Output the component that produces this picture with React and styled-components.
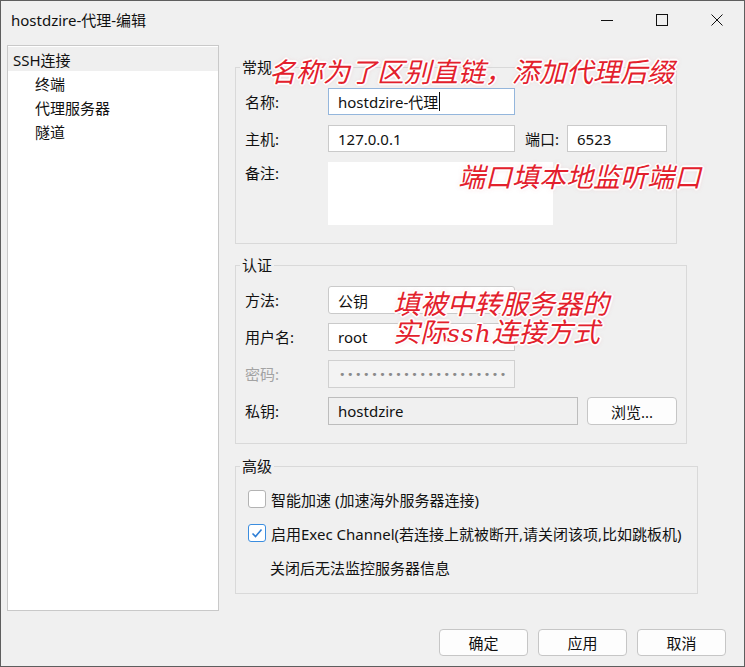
import React from "react";
import styled, { createGlobalStyle, css } from "styled-components";

const FONT = `"Noto Sans", "Noto Sans CJK SC", sans-serif`;

const Global = createGlobalStyle`
  html, body { margin: 0; padding: 0; background: #f0f0f0; }
  * { box-sizing: border-box; }
  body { font-family: ${FONT}; color: #111; }
`;

const Window = styled.div`
  position: relative;
  width: 745px;
  height: 667px;
  border: 1px solid #5e5e5e;
  background: #f0f0f0;
  display: flex;
  flex-direction: column;
  overflow: hidden;
`;

const TitleBar = styled.div`
  height: 38px;
  display: flex;
  align-items: center;
  justify-content: space-between;
  padding-left: 10px;
`;

const Title = styled.div`
  font-size: 15px;
  line-height: 18px;
  color: #111;
`;

const Controls = styled.div`
  display: flex;
  height: 100%;
`;

const Ctrl = styled.div`
  width: 55px;
  height: 100%;
  display: flex;
  align-items: center;
  justify-content: center;
`;

const Body = styled.div`
  display: flex;
  padding: 6px 0 0 6px;
`;

const Tree = styled.div`
  width: 212px;
  height: 566px;
  background: #fff;
  border: 1px solid #c9c9c9;
  padding-top: 1px;
`;

const TreeItem = styled.div`
  height: 24px;
  display: flex;
  align-items: center;
  font-size: 15px;
  padding-left: ${(p) => (p.$indent ? 27 : 5)}px;
  background: ${(p) => (p.$selected ? "#efefef" : "transparent")};
`;

const Main = styled.div`
  display: flex;
  flex-direction: column;
  padding: 13px 0 0 16px;
`;

const Group = styled.fieldset`
  margin: ${(p) => p.$mt || 0}px 0 0 0;
  padding: 0;
  width: ${(p) => p.$w}px;
  border: 1px solid #d9d9d9;
  min-width: 0;
`;

const Legend = styled.legend`
  margin-left: 4px;
  padding: 0 2px;
  font-size: 15px;
  line-height: 18px;
  color: #111;
`;

const GroupInner = styled.div`
  display: flex;
  flex-direction: column;
  gap: ${(p) => p.$gap}px;
  padding: ${(p) => p.$pad};
`;

const Row = styled.div`
  display: flex;
  align-items: ${(p) => (p.$top ? "flex-start" : "center")};
`;

const Label = styled.div`
  width: ${(p) => p.$w || 83}px;
  font-size: 15px;
  line-height: 18px;
  color: ${(p) => (p.$disabled ? "#a3a3a3" : "#111")};
  margin-top: ${(p) => p.$mt || 0}px;
  margin-left: ${(p) => p.$ml || 0}px;
  flex-shrink: 0;
`;

const fieldBase = css`
  height: ${(p) => p.$h || 27}px;
  width: ${(p) => p.$w}px;
  display: flex;
  align-items: center;
  padding-left: 9px;
  font-size: 15px;
  color: #111;
  flex-shrink: 0;
  overflow: hidden;
  white-space: nowrap;
`;

const Field = styled.div`
  ${fieldBase}
  background: ${(p) => (p.$bg ? p.$bg : "#fff")};
  border: 1px solid ${(p) => p.$border || "#cacaca"};
  border-radius: ${(p) => p.$radius || 0}px;
`;

const TextArea = styled.div`
  width: 225px;
  height: 63px;
  background: #fff;
  flex-shrink: 0;
`;

const Caret = styled.span`
  display: inline-block;
  width: 1px;
  height: 19px;
  background: #111;
  margin-left: 1px;
`;

const Dots = styled.span`
  font-size: 11px;
  letter-spacing: 1.55px;
  color: #8a8a8a;
  font-family: "DejaVu Sans", sans-serif;
  margin-left: 1px;
`;

const Button = styled.div`
  width: ${(p) => p.$w || 89}px;
  height: ${(p) => p.$h || 27}px;
  display: flex;
  align-items: center;
  justify-content: center;
  background: #fdfdfd;
  border: 1px solid #c6c6c6;
  border-radius: 4px;
  font-size: 15px;
  color: #111;
  margin-left: ${(p) => p.$ml || 0}px;
  flex-shrink: 0;
`;

const CheckRow = styled.div`
  height: 34px;
  display: flex;
  align-items: center;
  font-size: 15px;
  padding-left: ${(p) => (p.$plain ? 22 : 0)}px;
`;

const Box = styled.div`
  width: 18px;
  height: 18px;
  border: 1px solid ${(p) => (p.$on ? "#3b8ddf" : "#b3b3b3")};
  border-radius: 3px;
  background: #fff;
  margin-right: 5px;
  display: flex;
  align-items: center;
  justify-content: center;
`;

const Footer = styled.div`
  display: flex;
  justify-content: flex-end;
  gap: 10px;
  padding: 18px 18px 0 0;
`;

const Note = styled.div`
  position: absolute;
  left: ${(p) => p.$x}px;
  top: ${(p) => p.$y}px;
  font-family: "Noto Sans CJK SC", sans-serif;
  font-size: 27px;
  line-height: 28px;
  font-style: italic;
  color: #e3202c;
  white-space: nowrap;
  text-shadow:
    1px 0 0 #fff, -1px 0 0 #fff, 0 1px 0 #fff, 0 -1px 0 #fff,
    1px 1px 0 #fff, -1px -1px 0 #fff, 1px -1px 0 #fff, -1px 1px 0 #fff,
    2px 0 1px #fff, -2px 0 1px #fff, 0 2px 1px #fff, 0 -2px 1px #fff,
    0 0 4px rgba(230, 120, 130, 0.5);
`;

const Latin = styled.span`
  font-family: "DejaVu Serif", serif;
  font-size: 25px;
  letter-spacing: 1px;
`;

function Check({ on }) {
  return (
    <Box $on={on}>
      {on && (
        <svg width="12" height="12" viewBox="0 0 12 12">
          <polyline points="1.5,6.5 4.5,9.5 10.5,2.5" fill="none" stroke="#2f7fd6" strokeWidth="1.6" />
        </svg>
      )}
    </Box>
  );
}

export default function App() {
  return (
    <>
      <Global />
      <Window>
        <TitleBar>
          <Title>hostdzire-代理-编辑</Title>
          <Controls>
            <Ctrl>
              <svg width="12" height="12" viewBox="0 0 12 12">
                <line x1="0" y1="6.5" x2="12" y2="6.5" stroke="#111" strokeWidth="1" />
              </svg>
            </Ctrl>
            <Ctrl>
              <svg width="12" height="12" viewBox="0 0 12 12">
                <rect x="0.5" y="0.5" width="11" height="11" fill="none" stroke="#111" strokeWidth="1" />
              </svg>
            </Ctrl>
            <Ctrl>
              <svg width="12" height="12" viewBox="0 0 12 12">
                <path d="M0.5 0.5 L11.5 11.5 M11.5 0.5 L0.5 11.5" stroke="#111" strokeWidth="1" />
              </svg>
            </Ctrl>
          </Controls>
        </TitleBar>

        <Body>
          <Tree>
            <TreeItem $selected>SSH连接</TreeItem>
            <TreeItem $indent>终端</TreeItem>
            <TreeItem $indent>代理服务器</TreeItem>
            <TreeItem $indent>隧道</TreeItem>
          </Tree>

          <Main>
            <Group $w={442}>
              <Legend>常规</Legend>
              <GroupInner $gap={10} $pad="12px 9px 18px 9px">
                <Row>
                  <Label>名称:</Label>
                  <Field $w={187} $border="#94b6dc">
                    hostdzire-代理<Caret />
                  </Field>
                </Row>
                <Row>
                  <Label>主机:</Label>
                  <Field $w={187}>127.0.0.1</Field>
                  <Label $w={42} $ml={10}>端口:</Label>
                  <Field $w={100}>6523</Field>
                </Row>
                <Row $top>
                  <Label $mt={2}>备注:</Label>
                  <TextArea />
                </Row>
              </GroupInner>
            </Group>

            <Group $w={452} $mt={12}>
              <Legend>认证</Legend>
              <GroupInner $gap={9} $pad="12px 9px 18px 9px">
                <Row>
                  <Label>方法:</Label>
                  <Field $w={187} $h={28} $radius={3}>公钥</Field>
                </Row>
                <Row>
                  <Label>用户名:</Label>
                  <Field $w={187} $h={28}>root</Field>
                </Row>
                <Row>
                  <Label $disabled>密码:</Label>
                  <Field $w={187} $h={28} $bg="#f3f3f3" $border="#d0d0d0">
                    <Dots>•••••••••••••••••••••</Dots>
                  </Field>
                </Row>
                <Row>
                  <Label>私钥:</Label>
                  <Field $w={250} $h={28} $bg="#f0f0f0" $border="#bdbdbd">hostdzire</Field>
                  <Button $w={90} $h={28} $ml={9}>浏览...</Button>
                </Row>
              </GroupInner>
            </Group>

            <Group $w={463} $mt={13}>
              <Legend>高级</Legend>
              <GroupInner $gap={0} $pad="7px 12px 9px 12px">
                <CheckRow>
                  <Check />
                  智能加速 (加速海外服务器连接)
                </CheckRow>
                <CheckRow>
                  <Check on />
                  启用Exec Channel(若连接上就被断开,请关闭该项,比如跳板机)
                </CheckRow>
                <CheckRow $plain>关闭后无法监控服务器信息</CheckRow>
              </GroupInner>
            </Group>
          </Main>
        </Body>

        <Footer>
          <Button>确定</Button>
          <Button>应用</Button>
          <Button>取消</Button>
        </Footer>

        <Note $x={268} $y={56}>名称为了区别直链，添加代理后缀</Note>
        <Note $x={457} $y={161}>端口填本地监听端口</Note>
        <Note $x={392} $y={288}>
          填被中转服务器的
          <br />
          实际<Latin>ssh</Latin>连接方式
        </Note>
      </Window>
    </>
  );
}
